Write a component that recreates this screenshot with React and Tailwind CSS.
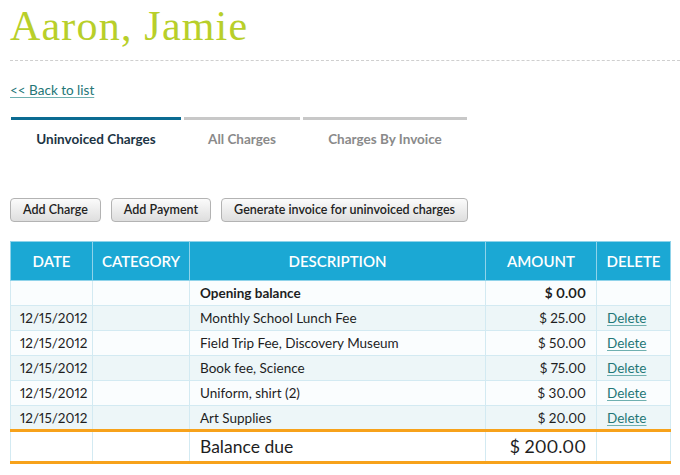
import React from "react";

const rows = [
  { date: "12/15/2012", desc: "Monthly School Lunch Fee", amt: "$ 25.00" },
  { date: "12/15/2012", desc: "Field Trip Fee, Discovery Museum", amt: "$ 50.00" },
  { date: "12/15/2012", desc: "Book fee, Science", amt: "$ 75.00" },
  { date: "12/15/2012", desc: "Uniform, shirt (2)", amt: "$ 30.00" },
  { date: "12/15/2012", desc: "Art Supplies", amt: "$ 20.00" },
];

function Btn({ children }) {
  return (
    <button className="h-[24px] px-[12px] rounded-[4px] border border-[#b3b3b3] bg-gradient-to-b from-[#fbfbfb] to-[#dedede] text-[12.5px] font-semibold text-[#222] leading-none">
      {children}
    </button>
  );
}

export default function App() {
  return (
    <div
      className="w-[680px] h-[475px] overflow-hidden bg-white pl-[10px] proportional-nums"
      style={{ fontFamily: "Lato, 'Open Sans', sans-serif" }}
    >
      <h1
        className="pt-[4px] h-[46px] text-[42px] leading-[44px] text-[#b8cf2a] tracking-[1.2px]"
        style={{ fontFamily: "'Liberation Serif', serif", fontWeight: 400 }}
      >
        Aaron, Jamie
      </h1>
      <div className="mt-[14px] border-b border-dashed border-[#cfcfcf]" />
      <div className="mt-[21px] h-[16px] text-[13.5px] leading-[16px]">
        <a href="#" className="text-[#237676] underline decoration-[#6fb0b0] underline-offset-2">
          &lt;&lt; Back to list
        </a>
      </div>

      <div className="mt-[19px] flex gap-[3px] ml-[1px]">
        <div className="w-[170px] border-t-[3px] border-[#0b6b92] pt-[9px] text-center text-[13.5px] font-bold text-[#1c3444]">
          Uninvoiced Charges
        </div>
        <div className="w-[116px] border-t-[3px] border-[#c8c8c8] pt-[9px] text-center text-[13.5px] font-bold text-[#8a8a8a]">
          All Charges
        </div>
        <div className="w-[164px] border-t-[3px] border-[#c8c8c8] pt-[9px] text-center text-[13.5px] font-bold text-[#8a8a8a]">
          Charges By Invoice
        </div>
      </div>

      <div className="mt-[49px] flex gap-[10px]">
        <Btn>Add Charge</Btn>
        <Btn>Add Payment</Btn>
        <Btn>Generate invoice for uninvoiced charges</Btn>
      </div>

      <table className="mt-[19px] w-[660px] border-collapse table-fixed text-[13.5px] text-[#1e1e1e]">
        <colgroup>
          <col className="w-[82px]" />
          <col className="w-[97px]" />
          <col className="w-[296px]" />
          <col className="w-[111px]" />
          <col className="w-[74px]" />
        </colgroup>
        <thead>
          <tr className="h-[39px] bg-[#1ba8d4] text-white text-[15px] font-semibold">
            <th className="border border-[#8fd3ea] font-semibold">DATE</th>
            <th className="border border-[#8fd3ea] font-semibold">CATEGORY</th>
            <th className="border border-[#8fd3ea] font-semibold">DESCRIPTION</th>
            <th className="border border-[#8fd3ea] font-semibold">AMOUNT</th>
            <th className="border border-[#8fd3ea] font-semibold">DELETE</th>
          </tr>
        </thead>
        <tbody>
          <tr className="h-[25px] bg-[#fafdfe]">
            <td className="border border-[#d3eaf2]"></td>
            <td className="border border-[#d3eaf2]"></td>
            <td className="border border-[#d3eaf2] pl-[10px] font-bold">Opening balance</td>
            <td className="border border-[#d3eaf2] pr-[10px] text-right font-bold">$ 0.00</td>
            <td className="border border-[#d3eaf2]"></td>
          </tr>
          {rows.map((r, i) => (
            <tr key={i} className={"h-[25px] " + (i % 2 === 0 ? "bg-[#edf6f8]" : "bg-[#fafdfe]")}>
              <td className="border border-[#d3eaf2] pl-[9px]">{r.date}</td>
              <td className="border border-[#d3eaf2]"></td>
              <td className="border border-[#d3eaf2] pl-[10px]">{r.desc}</td>
              <td className="border border-[#d3eaf2] pr-[10px] text-right">{r.amt}</td>
              <td className="border border-[#d3eaf2] pl-[10px]">
                <a href="#" className="text-[#237676] underline decoration-[#6fb0b0] underline-offset-2">
                  Delete
                </a>
              </td>
            </tr>
          ))}
          <tr className="h-[32px] bg-white">
            <td className="border-x border-[#d3eaf2] border-y-[3px] border-y-[#f7a21b]"></td>
            <td className="border-x border-[#d3eaf2] border-y-[3px] border-y-[#f7a21b]"></td>
            <td className="border-x border-[#d3eaf2] border-y-[3px] border-y-[#f7a21b] pl-[10px] text-[17.5px]">Balance due</td>
            <td className="border-x border-[#d3eaf2] border-y-[3px] border-y-[#f7a21b] pr-[10px] text-right text-[18px]">$ 200.00</td>
            <td className="border-x border-[#d3eaf2] border-y-[3px] border-y-[#f7a21b]"></td>
          </tr>
        </tbody>
      </table>
    </div>
  );
}
